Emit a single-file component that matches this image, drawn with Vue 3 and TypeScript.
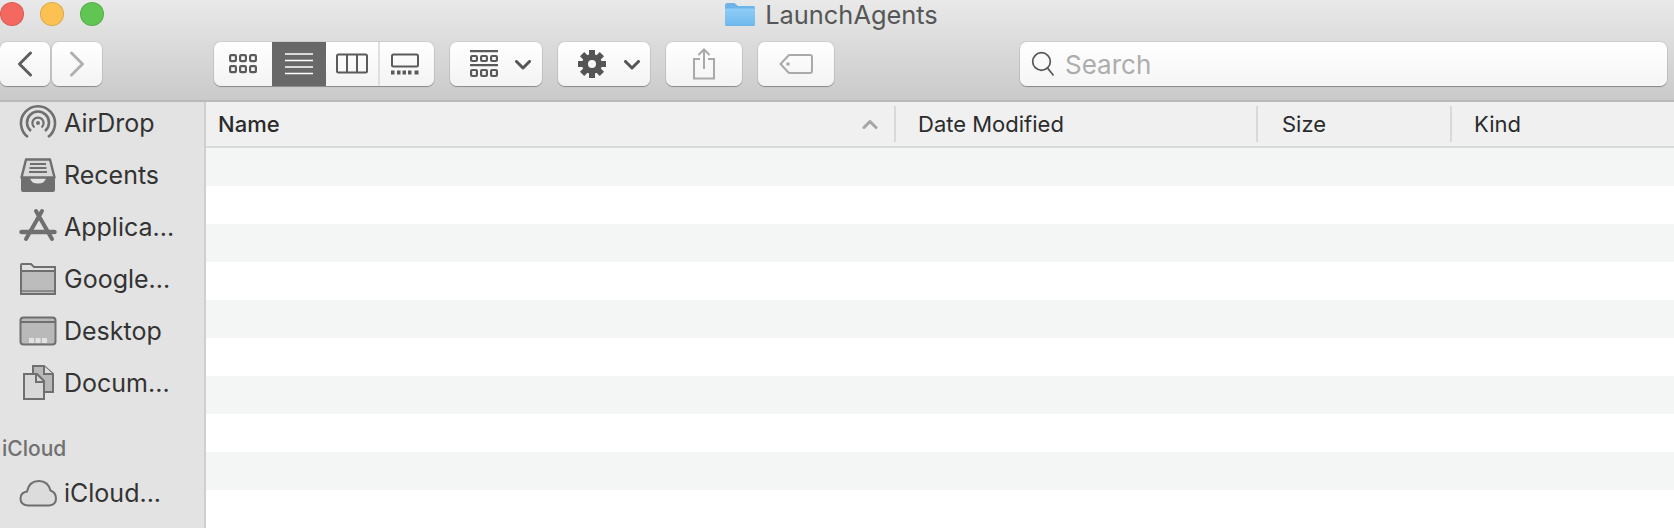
<script setup lang="ts">
const stripes: number[] = Array.from({ length: 10 }, (_, i) => i)
</script>

<template>
  <div class="window">
    <header class="toolbar">
      <div class="titlebar">
        <div class="lights">
          <span class="light red"></span>
          <span class="light yellow"></span>
          <span class="light green"></span>
        </div>
        <div class="title">
          <svg class="folder" width="32" height="26" viewBox="0 0 32 26">
            <defs>
              <linearGradient id="fg" x1="0" y1="0" x2="0" y2="1">
                <stop offset="0" stop-color="#8fcdf5" />
                <stop offset="1" stop-color="#6fb9ee" />
              </linearGradient>
            </defs>
            <path d="M1 4.500Q1 2 3 2H10.500L14 5H29.500Q31 5 31 6.500V23.500Q31 25 29.500 25H2.500Q1 25 1 23.500Z" fill="#6db4e9" />
            <path d="M1 7.500H31V23.500Q31 24 29.500 24H2.500Q1 24 1 23.500Z" fill="url(#fg)" />
          </svg>
          <span>LaunchAgents</span>
        </div>
      </div>
      <div class="controls">
        <div class="nav">
          <button class="btn nav-btn">
            <svg width="16" height="26" viewBox="0 0 16 26"><path d="M13.500 2 2.500 13l11 11" class="chev" stroke="#5e5e5e" /></svg>
          </button>
          <button class="btn nav-btn">
            <svg width="16" height="26" viewBox="0 0 16 26"><path d="M2.500 2l11 11-11 11" class="chev" stroke="#b0b0b0" /></svg>
          </button>
        </div>
        <div class="segment">
          <div class="seg seg-icons">
            <svg width="28" height="20" viewBox="0 0 28 20" fill="none" stroke="#5a5a5a" stroke-width="2.200">
              <rect x="1.100" y="1.100" width="5.800" height="6" rx="1.200" /><rect x="11.100" y="1.100" width="5.800" height="6" rx="1.200" /><rect x="21.100" y="1.100" width="5.800" height="6" rx="1.200" />
              <rect x="1.100" y="12.100" width="5.800" height="6" rx="1.200" /><rect x="11.100" y="12.100" width="5.800" height="6" rx="1.200" /><rect x="21.100" y="12.100" width="5.800" height="6" rx="1.200" />
            </svg>
          </div>
          <div class="seg seg-list">
            <svg width="28" height="22" viewBox="0 0 28 22" stroke="#fff" stroke-width="1.600">
              <path d="M0 1h28M0 7.500h28M0 14h28M0 20.500h28" />
            </svg>
          </div>
          <div class="seg seg-cols">
            <svg width="32" height="22" viewBox="0 0 32 22" fill="none" stroke="#5a5a5a" stroke-width="2">
              <rect x="1" y="1.500" width="30" height="18" rx="1.500" /><path d="M11 1.500v18M21 1.500v18" />
            </svg>
          </div>
          <div class="seg seg-gallery">
            <svg width="30" height="22" viewBox="0 0 30 22">
              <rect x="2" y="1.500" width="26" height="12" rx="1.500" fill="none" stroke="#5a5a5a" stroke-width="2" />
              <path d="M1 17.500h3.500v4H1zM7 17.500h3.500v4H7zM12.500 17.500h3.500v4h-3.500zM18 17.500h3.500v4H18zM24.500 17.500h4v4h-4z" fill="#5a5a5a" />
            </svg>
          </div>
        </div>
        <button class="btn group-btn">
          <svg width="28" height="28" viewBox="0 0 28 28" stroke="#5a5a5a" fill="none" stroke-width="2.200">
            <path d="M0 1.200h28M0 15.200h28" />
            <rect x="1.100" y="6" width="5.800" height="5" rx="1" /><rect x="11.100" y="6" width="5.800" height="5" rx="1" /><rect x="21.100" y="6" width="5.800" height="5" rx="1" />
            <rect x="1.100" y="20" width="5.800" height="6" rx="1" /><rect x="11.100" y="20" width="5.800" height="6" rx="1" /><rect x="21.100" y="20" width="5.800" height="6" rx="1" />
          </svg>
          <svg class="drop" width="16" height="10" viewBox="0 0 16 10"><path d="M1.500 1.500 8 8l6.500-6.500" class="chev thin" stroke="#555" /></svg>
        </button>
        <button class="btn gear-btn">
          <svg width="28" height="28" viewBox="0 0 28 28">
            <g fill="#555">
              <path d="M11 0h6v6h-6zM11 22h6v6h-6zM0 11h6v6H0zM22 11h6v6h-6z" />
              <path d="M11 0h6v6h-6zM11 22h6v6h-6zM0 11h6v6H0zM22 11h6v6h-6z" transform="rotate(45 14 14)" />
            </g>
            <circle cx="14" cy="14" r="7" fill="none" stroke="#555" stroke-width="6" />
          </svg>
          <svg class="drop" width="16" height="10" viewBox="0 0 16 10"><path d="M1.500 1.500 8 8l6.500-6.500" class="chev thin" stroke="#555" /></svg>
        </button>
        <button class="btn share-btn">
          <svg width="24" height="32" viewBox="0 0 24 32" fill="none" stroke="#a9a9a9" stroke-width="2">
            <path d="M8 11H2v19.500h20V11h-6M12 21V1.500M6.500 7 12 1.500 17.500 7" />
          </svg>
        </button>
        <button class="btn tag-btn">
          <svg width="34" height="22" viewBox="0 0 34 22" fill="none" stroke="#a9a9a9" stroke-width="2">
            <path d="M10 2h21q2 0 2 2v14q0 2-2 2H10l-8.500-9z" />
            <circle cx="9" cy="11" r="1.800" fill="#a9a9a9" stroke="none" />
          </svg>
        </button>
        <label class="search">
          <svg width="24" height="26" viewBox="0 0 24 26" fill="none" stroke="#555" stroke-width="1.700">
            <circle cx="10.500" cy="10.500" r="8.800" /><path d="M16.500 17l6 7.500" />
          </svg>
          <span>Search</span>
        </label>
      </div>
    </header>

    <div class="body">
      <aside class="sidebar">
        <div class="side-item">
          <svg width="38" height="38" viewBox="0 0 38 38" fill="none" stroke="#6f6f6f" stroke-width="2.600">
            <path d="M9 33A17 17 0 1 1 29 33" />
            <path d="M12 27A11 11 0 1 1 26 27" />
            <path d="M15.500 23.500A5.600 5.600 0 1 1 22.500 23.500" stroke-width="2.200" />
            <circle cx="19" cy="19" r="2" fill="#6f6f6f" stroke="none" />
          </svg>
          <span>AirDrop</span>
        </div>
        <div class="side-item">
          <svg width="38" height="38" viewBox="0 0 38 38">
            <path d="M7 3.500h24l4.500 18H2.500z" fill="#d9d9d9" stroke="#6f6f6f" stroke-width="2.400" stroke-linejoin="round" />
            <path d="M2 22h9q1 5.500 8 5.500t8-5.500h9v12q0 2-2 2H4q-2 0-2-2z" fill="#6f6f6f" />
            <path d="M11 8h16M10.500 12h17M10 16h18" stroke="#6f6f6f" stroke-width="2" />
          </svg>
          <span>Recents</span>
        </div>
        <div class="side-item">
          <svg width="38" height="38" viewBox="0 0 38 38" fill="none" stroke="#6f6f6f" stroke-linecap="round">
            <path d="M23 3 7 31M17 3l16 28" stroke-width="4" />
            <path d="M2.500 24h33" stroke-width="4.500" />
          </svg>
          <span>Applica...</span>
        </div>
        <div class="side-item">
          <svg width="38" height="34" viewBox="0 0 38 34">
            <path d="M2 31V3q0-1 1-1h9l3 3h21v27H2z" fill="#e0e0e0" stroke="#6f6f6f" stroke-width="2" />
            <path d="M2 9h34v23H2z" fill="#bcbcbc" stroke="#6f6f6f" stroke-width="2" />
            <path d="M3 29h32" stroke="#8b8b8b" stroke-width="2" />
          </svg>
          <span>Google...</span>
        </div>
        <div class="side-item">
          <svg width="38" height="30" viewBox="0 0 38 30">
            <rect x="1.500" y="1.500" width="35" height="27" rx="3" fill="#b9b9b9" stroke="#6f6f6f" stroke-width="2" />
            <path d="M1.500 6h35" stroke="#6f6f6f" stroke-width="2" />
            <path d="M10 22h5v5h-5zM16.500 22h5v5h-5zM23 22h5v5h-5z" fill="#e2e2e2" />
          </svg>
          <span>Desktop</span>
        </div>
        <div class="side-item">
          <svg width="38" height="38" viewBox="0 0 38 38">
            <path d="M14 2h11l9 8v18H14z" fill="#b8b8b8" stroke="#6f6f6f" stroke-width="2" />
            <path d="M25 2v8h9" fill="#dedede" stroke="#6f6f6f" stroke-width="2" />
            <path d="M5 10h13l7 7v18H5z" fill="#d8d8d8" stroke="#6f6f6f" stroke-width="2" />
            <path d="M17 10v8h8" fill="none" stroke="#6f6f6f" stroke-width="2" />
          </svg>
          <span>Docum...</span>
        </div>
        <div class="side-head">iCloud</div>
        <div class="side-item">
          <svg width="38" height="28" viewBox="0 0 38 28">
            <path d="M9 26.500Q1.500 26 1.500 19.500 1.500 13.500 8 12.500 10 2 20 2q9 0 11.500 9.500 5.500 2 5.500 8 0 6.500-7 7z" fill="#dcdcdc" stroke="#6f6f6f" stroke-width="2" />
          </svg>
          <span>iCloud...</span>
        </div>
      </aside>

      <main class="list">
        <div class="thead">
          <div class="th th-name"><b>Name</b>
            <svg width="16" height="10" viewBox="0 0 16 10"><path d="M2 8.500l6-6 6 6" class="chev thin" stroke="#a5a5a5" /></svg>
          </div>
          <div class="th th-date">Date Modified</div>
          <div class="th th-size">Size</div>
          <div class="th th-kind">Kind</div>
        </div>
        <div v-for="i in stripes" :key="i" class="stripe"></div>
      </main>
    </div>
  </div>
</template>

<style scoped>
.window {
  width: 1674px;
  height: 528px;
  overflow: hidden;
  display: flex;
  flex-direction: column;
  font-family: "Inter", "Liberation Sans", sans-serif;
  background: #fff;
}
.toolbar {
  position: relative;
  z-index: 1;
  flex: none;
  height: 102px;
  box-sizing: border-box;
  background: linear-gradient(#e9e9e9, #cacaca);
  border-bottom: 2px solid #b9b9b9;
}
.titlebar {
  height: 42px;
  display: grid;
  grid-template-columns: 1fr auto 1fr;
  padding-right: 12px;
}
.lights {
  display: flex;
  gap: 16px;
  padding-top: 2px;
}
.light {
  width: 24px;
  height: 24px;
  box-sizing: border-box;
  border-radius: 50%;
  border: 1px solid rgba(0, 0, 0, 0.12);
}
.red { background: #f4695f; }
.yellow { background: #fbc152; }
.green { background: #61c554; }
.title {
  display: flex;
  align-items: flex-start;
  gap: 9px;
  color: #565656;
  font-size: 25.4px;
  line-height: 29px;
}
.folder { margin-top: 1px; }
.controls {
  display: flex;
  align-items: flex-start;
}
.btn {
  height: 44px;
  box-sizing: border-box;
  padding: 0;
  display: flex;
  align-items: center;
  justify-content: center;
  border: 0;
  border-radius: 7px;
  background: linear-gradient(#ffffff, #f3f3f3);
  box-shadow: 0 0 0 1px rgba(0, 0, 0, 0.06), 0 1px 1px rgba(0, 0, 0, 0.3);
}
.chev {
  fill: none;
  stroke-width: 3;
  stroke-linecap: round;
  stroke-linejoin: round;
}
.nav {
  display: flex;
  gap: 2px;
  margin-right: 112px;
}
.nav-btn { width: 50px; }
.segment {
  display: flex;
  width: 220px;
  height: 44px;
  margin-right: 16px;
  border-radius: 7px;
  overflow: hidden;
  background: linear-gradient(#ffffff, #f3f3f3);
  box-shadow: 0 0 0 1px rgba(0, 0, 0, 0.06), 0 1px 1px rgba(0, 0, 0, 0.3);
}
.seg {
  display: flex;
  align-items: center;
  justify-content: center;
}
.seg-icons { width: 58px; }
.seg-list { width: 54px; background: #686868; height: 46px; margin-top: -1px; }
.seg-cols { width: 52px; }
.seg-gallery {
  width: 56px;
  padding-right: 4px;
  border-left: 2px solid #e0e0e0;
  box-sizing: border-box;
}
.group-btn, .gear-btn {
  width: 92px;
  justify-content: flex-start;
  padding-left: 20px;
  gap: 17px;
  margin-right: 16px;
}
.gear-btn { gap: 18px; }
.drop { margin-top: 1px; }
.share-btn, .tag-btn {
  width: 76px;
  margin-right: 16px;
}
.tag-btn { margin-right: 186px; }
.search {
  flex: none;
  width: 647px;
  height: 44px;
  box-sizing: border-box;
  padding-left: 11px;
  display: flex;
  align-items: center;
  gap: 10px;
  border-radius: 7px;
  background: linear-gradient(#ffffff, #f5f5f5);
  box-shadow: 0 0 0 1px rgba(0, 0, 0, 0.06), 0 1px 1px rgba(0, 0, 0, 0.3);
  color: #adadad;
  font-size: 26px;
}
.body {
  flex: 1;
  display: flex;
  min-height: 0;
}
.sidebar {
  flex: none;
  width: 206px;
  box-sizing: border-box;
  background: #e3e3e3;
  border-right: 2px solid #cfcfcf;
  margin-top: -5px;
  color: #333;
  font-size: 25px;
}
.side-item {
  height: 52px;
  display: grid;
  grid-template-columns: 38px 1fr;
  gap: 7px;
  align-items: center;
  justify-items: center;
  padding-left: 19px;
}
.side-item span { justify-self: start; }
.side-head {
  height: 58px;
  box-sizing: border-box;
  padding: 27px 0 0 2px;
  line-height: 26px;
  font-size: 21px;
  font-weight: 500;
  color: #707070;
}
.list {
  flex: 1;
  min-width: 0;
}
.thead {
  height: 46px;
  box-sizing: border-box;
  display: flex;
  background: #f0f0f0;
  border-bottom: 2px solid #dadada;
  padding-top: 4px;
  color: #2b2b2b;
  font-size: 22px;
}
.th {
  height: 36px;
  box-sizing: border-box;
  display: flex;
  align-items: center;
  padding-left: 22px;
  border-left: 2px solid #d9d9d9;
}
.th b { font-weight: 500; }
.th-name {
  width: 688px;
  justify-content: space-between;
  padding: 0 16px 0 12px;
  border-left: 0;
}
.th-date { width: 362px; }
.th-size { width: 194px; padding-left: 24px; }
.th-kind { flex: 1; }
.stripe {
  height: 38px;
  background: #fff;
}
.stripe:nth-child(even) { background: #f4f5f5; }
</style>
